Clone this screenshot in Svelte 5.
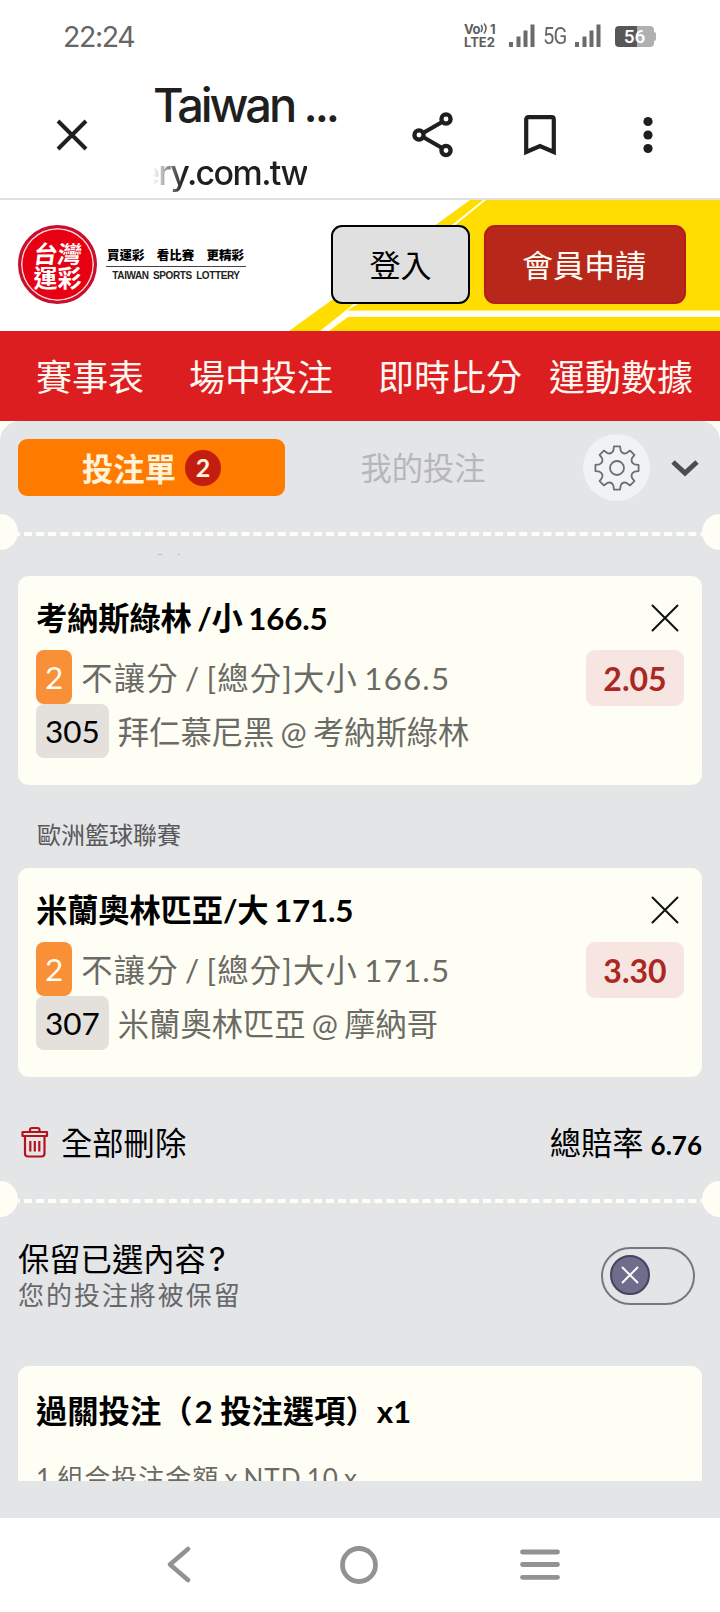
<script lang="ts">
	type Bet = {
		league?: string;
		pick: string;
		line: string;
		market: string;
		code: string;
		match: string;
		odds: string;
	};

	const navItems = ['賽事表', '場中投注', '即時比分', '運動數據'];

	const bets: Bet[] = [
		{
			pick: '考納斯綠林 /小',
			line: '166.5',
			market: '不讓分 / [總分]大小',
			code: '305',
			match: '拜仁慕尼黑 @ 考納斯綠林',
			odds: '2.05'
		},
		{
			league: '歐洲籃球聯賽',
			pick: '米蘭奧林匹亞/大',
			line: '171.5',
			market: '不讓分 / [總分]大小',
			code: '307',
			match: '米蘭奧林匹亞 @ 摩納哥',
			odds: '3.30'
		}
	];

	// eight-toothed outline, drawn around 0,0
	const gearPath = Array.from({ length: 8 }, (_, i) => {
		const at = (r: number, deg: number) => {
			const a = ((i * 45 + deg - 90) * Math.PI) / 180;
			return `${(r * Math.cos(a)).toFixed(2)} ${(r * Math.sin(a)).toFixed(2)}`;
		};
		return `${i ? 'L' : 'M'}${at(21.8, -8)} L${at(21.8, 8)} L${at(17.8, 12)} Q${at(14.6, 22.5)} ${at(17.8, 33)}`;
	}).join(' ') + ' Z';
</script>

{#snippet signal()}
	<svg class="signal" width="26" height="24" viewBox="0 0 26 24">
		<path d="M0 18h4v5H0zM7.5 12.5h4v10.5h-4zM14.5 6.5h4v16.5h-4zM21.5 0.5h4v22.5h-4z" fill="#6b6b6b" />
	</svg>
{/snippet}

{#snippet divider()}
	<div class="divider">
		<span class="notch left"></span>
		<svg width="684" height="4" viewBox="0 0 684 4">
			<path d="M0 2H684" stroke="#fffef5" stroke-width="4" stroke-dasharray="8 4.08" stroke-dashoffset="6.08" />
		</svg>
		<span class="notch right"></span>
	</div>
{/snippet}

<div class="screen">
	<div class="status">
		<span class="time">22:24</span>
		<div class="volte">
			<span class="vo">Vo<svg width="8" height="11" viewBox="0 0 8 11"><path d="M1 2q2.5 3 0 7M4 .5q4 4.5 0 10" fill="none" stroke="#5e5e5e" stroke-width="1.5" /></svg><b>1</b></span>
			<span>LTE2</span>
		</div>
		{@render signal()}
		<span class="net">5G</span>
		{@render signal()}
		<div class="battery"><span>56</span></div>
	</div>

	<div class="toolbar">
		<svg class="close" width="32" height="32" viewBox="0 0 32 32">
			<path d="M2 2L30 30M30 2L2 30" stroke="#1f1f1f" stroke-width="4" />
		</svg>
		<div class="page">
			<div class="title">Taiwan ...</div>
			<div class="url"><span>ery.com.tw</span></div>
		</div>
		<svg class="share" width="42" height="46" viewBox="0 0 42 46">
			<path d="M7.5 23L34.5 7.5M7.5 23L34.5 38.5" stroke="#1f1f1f" stroke-width="4.2" />
			<g fill="#fff" stroke="#1f1f1f" stroke-width="4.3">
				<circle cx="7" cy="23" r="4.6" />
				<circle cx="34" cy="7" r="4.6" />
				<circle cx="34" cy="38.5" r="4.6" />
			</g>
		</svg>
		<svg class="bookmark" width="32" height="41" viewBox="0 0 32 41">
			<path d="M2.2 37V4.5q0-2.3 2.3-2.3h23q2.3 0 2.3 2.3V37L16 31z" fill="none" stroke="#1f1f1f" stroke-width="4.2" />
		</svg>
		<svg class="more" width="10" height="38" viewBox="0 0 10 38" fill="#1f1f1f">
			<circle cx="5" cy="5.5" r="4.6" />
			<circle cx="5" cy="19" r="4.6" />
			<circle cx="5" cy="32.5" r="4.6" />
		</svg>
	</div>

	<header>
		<svg class="stripes" width="431" height="131" viewBox="0 0 431 131">
			<path d="M181 0H431V131H0z" fill="#ffdd00" />
			<path d="M194 0H197L69 104L58 110.5H431V117H59L40 131H31z" fill="#fffef0" />
		</svg>
		<div class="logo">
			<span>台灣</span>
			<span>運彩</span>
		</div>
		<div class="slogan">
			<div class="zh"><span>買運彩</span><span>看比賽</span><span>更精彩</span></div>
			<div class="en">TAIWAN SPORTS LOTTERY</div>
		</div>
		<button class="login">登入</button>
		<button class="register">會員申請</button>
	</header>

	<nav>
		{#each navItems as item}
			<span>{item}</span>
		{/each}
	</nav>

	<div class="backdrop">
		<main>
			<div class="tabs">
				<div class="tab active">投注單<span class="count">2</span></div>
				<div class="tab">我的投注</div>
				<div class="settings">
					<svg width="48" height="48" viewBox="-24 -24 48 48" fill="none" stroke="#6d6e71" stroke-width="1.8" stroke-linejoin="round">
						<path d={gearPath} />
						<circle r="7" />
					</svg>
				</div>
				<svg class="chevron" width="28" height="18" viewBox="0 0 28 18">
					<path d="M2 3L14 14L26 3" fill="none" stroke="#4c4d50" stroke-width="5" />
				</svg>
			</div>

			{@render divider()}

			<div class="specks"><i></i><i></i></div>

			{#each bets as bet}
				{#if bet.league}
					<div class="league">{bet.league}</div>
				{/if}
				<section class="card">
					<div class="row head">
						<h3>{bet.pick} {bet.line}</h3>
						<svg width="28" height="28" viewBox="0 0 28 28">
							<path d="M1.5 1.5L26.5 26.5M26.5 1.5L1.5 26.5" stroke="#111" stroke-width="2" stroke-linecap="round" />
						</svg>
					</div>
					<div class="row market">
						<span class="tag orange">2</span>
						<span class="text wide">{bet.market} {bet.line}</span>
						<span class="odds">{bet.odds}</span>
					</div>
					<div class="row">
						<span class="tag">{bet.code}</span>
						<span class="text">{bet.match}</span>
					</div>
				</section>
			{/each}

			<div class="summary">
				<svg width="28" height="32" viewBox="0 0 28 32" fill="none" stroke="#b5121b" stroke-width="2.2" stroke-linejoin="round">
					<path d="M1.500 6H26V10H1.500zM9 6V4q0-2 2-2h5.500q2 0 2 2V6M4 10V27.500q0 3 3 3H20.500q3 0 3-3V10M9.300 15V25.500M13.800 15V25.500M18.300 15V25.500" />
				</svg>
				<span class="clear">全部刪除</span>
				<span class="total">總賠率 <b>6.76</b></span>
			</div>

			{@render divider()}

			<div class="keep">
				<div>
					<div class="question">保留已選內容<span class="mark">?</span></div>
					<div class="hint">您的投注將被保留</div>
				</div>
				<div class="toggle">
					<span class="knob">
						<svg width="18" height="18" viewBox="0 0 18 18">
							<path d="M1 1L17 17M17 1L1 17" stroke="#fff" stroke-width="2" />
						</svg>
					</span>
				</div>
			</div>

			<section class="card parlay">
				<h3>過關投注（<span class="legs">2</span> 投注選項）x1</h3>
				<div class="stake">1 組合投注金額 x NTD 10 x</div>
			</section>
		</main>
	</div>

	<footer>
		<svg width="24" height="38" viewBox="0 0 24 38">
			<path d="M21 3L3 18.5L21 34" fill="none" stroke="#929292" stroke-width="4.5" stroke-linecap="round" stroke-linejoin="round" />
		</svg>
		<svg class="home" width="38" height="38" viewBox="0 0 38 38">
			<circle cx="19" cy="19" r="16.5" fill="none" stroke="#929292" stroke-width="4.8" />
		</svg>
		<svg width="40" height="32" viewBox="0 0 40 32">
			<path d="M2.500 3H37.500M2.500 15.500H37.500M2.500 28.300H37.500" stroke="#929292" stroke-width="4.8" stroke-linecap="round" />
		</svg>
	</footer>
</div>

<style>
	:global(body) {
		background: #fff;
	}

	.screen {
		width: 720px;
		height: 1612px;
		overflow: hidden;
		display: flex;
		flex-direction: column;
		font-family: Lato, 'Noto Sans CJK TC', sans-serif;
		color: #000;
		white-space: nowrap;
	}

	.screen * {
		box-sizing: border-box;
	}

	svg {
		display: block;
		flex: none;
	}

	.status {
		height: 72px;
		flex: none;
		display: flex;
		align-items: center;
		padding-left: 63px;
		font-family: Roboto, sans-serif;
		color: #666;
	}

	.time {
		width: 401px;
		flex: none;
		font-family: Inter, sans-serif;
		font-size: 28.5px;
		letter-spacing: -1.4px;
	}

	.volte {
		width: 45px;
		flex: none;
		font: 700 13px/13px Inter, sans-serif;
		color: #5e5e5e;
	}

	.volte span {
		display: flex;
	}

	.vo {
		letter-spacing: -0.5px;
	}

	.vo b {
		margin-left: 2px;
		font-weight: 700;
	}

	.net {
		width: 40px;
		flex: none;
		padding-left: 8px;
		font-size: 24px;
		letter-spacing: -1px;
		transform: scaleX(0.84);
		transform-origin: 8px 50%;
	}

	.battery {
		width: 39px;
		height: 21px;
		flex: none;
		margin-left: 14px;
		border-radius: 4px;
		background: linear-gradient(90deg, #575757 57%, #b0b0b0 57%);
		position: relative;
		text-align: center;
		font: 500 19px/21px Roboto, sans-serif;
		color: #fff;
	}

	.battery::after {
		content: '';
		position: absolute;
		right: -2px;
		top: 6px;
		width: 3px;
		height: 9px;
		border-radius: 0 2px 2px 0;
		background: #b0b0b0;
	}

	.toolbar {
		height: 128px;
		flex: none;
		display: flex;
		align-items: center;
		padding-left: 56px;
		border-bottom: 2px solid #dfe0e2;
		color: #1f1f1f;
		font-family: Inter, sans-serif;
		font-weight: 500;
	}

	.page {
		width: 258px;
		margin-left: 65px;
		margin-right: 1px;
		height: 126px;
	}

	.title {
		padding-top: 4px;
		font-size: 47px;
		line-height: 58px;
		letter-spacing: -3.1px;
	}

	.url {
		width: 154px;
		height: 46px;
		margin-top: 17px;
		overflow: hidden;
		display: flex;
		justify-content: flex-end;
		font-size: 34px;
		line-height: 44px;
		letter-spacing: -1.6px;
		mask-image: linear-gradient(90deg, transparent, #000 30px);
	}

	.bookmark {
		margin-left: 70px;
	}

	.more {
		margin-left: 87px;
	}

	header {
		height: 131px;
		flex: none;
		display: flex;
		align-items: center;
		padding: 0 34px 2px 18px;
		position: relative;
	}

	.stripes {
		position: absolute;
		right: 0;
		top: 0;
	}

	.logo {
		width: 79px;
		height: 79px;
		border-radius: 50%;
		background: #e60012;
		border: 3px solid #c8102e;
		box-shadow: inset 0 0 0 1.5px #fbd5d8;
		color: #fff;
		display: flex;
		flex-direction: column;
		align-items: center;
		justify-content: center;
		font: 700 24px/24px 'Noto Sans CJK TC', sans-serif;
	}

	.logo span:first-child {
		transform: skewX(-8deg);
	}

	.slogan {
		width: 140px;
		margin-left: 9px;
	}

	.zh {
		display: flex;
		justify-content: space-between;
		margin-top: -3px;
		padding: 0 2px 1px 1px;
		border-bottom: 1px solid #444;
		font: 900 12.5px/21px 'Noto Sans CJK TC', sans-serif;
	}

	.en {
		padding-top: 1px;
		text-align: center;
		font: 700 10px/15px 'Liberation Sans', sans-serif;
		letter-spacing: -0.4px;
		word-spacing: 2px;
		color: #222;
	}

	button {
		height: 79px;
		padding: 0 0 2px;
		border-radius: 11px;
		font-family: Lato, 'Noto Sans CJK TC', sans-serif;
		font-size: 31px;
		position: relative;
	}

	.login {
		width: 139px;
		margin-left: auto;
		border: 2px solid #000;
		background: #e0e0e0;
		color: #000;
	}

	.register {
		width: 202px;
		margin-left: 14px;
		padding-right: 2px;
		border: 2px solid #b71c1c;
		background: #b7281b;
		color: #fffef5;
	}

	nav {
		height: 90px;
		flex: none;
		display: flex;
		align-items: center;
		padding: 0 0 2px 36px;
		gap: 45px;
		background: #dc1e20;
		color: #fff8f0;
		font-size: 36px;
	}

	nav span:last-child {
		margin-left: -18px;
	}

	.backdrop {
		height: 1097px;
		flex: none;
		background: #fffef5;
	}

	main {
		height: 1097px;
		overflow: hidden;
		border-radius: 20px 20px 0 0;
		background: #e4e5e7;
	}

	.tabs {
		display: flex;
		align-items: center;
		height: 93px;
		padding-left: 18px;
	}

	.tab {
		width: 276px;
		height: 57px;
		display: flex;
		align-items: center;
		justify-content: center;
		margin-right: 67px;
		padding-bottom: 2px;
		font-size: 31.3px;
		color: #b6b7ba;
	}

	.tab.active {
		width: 267px;
		margin-right: 0;
		padding-bottom: 0;
		border-radius: 9px;
		background: #ff7b00;
		color: #fff3dc;
		font-weight: 700;
	}

	.count {
		width: 36px;
		height: 36px;
		margin-left: 9px;
		border-radius: 50%;
		background: #c31c10;
		text-align: center;
		font-size: 25px;
		line-height: 35px;
	}

	.settings {
		width: 67px;
		height: 67px;
		margin-left: -45px;
		border-radius: 50%;
		background: #f1f2f5;
		display: grid;
		place-items: center;
	}

	.chevron {
		margin-left: 21px;
	}

	.divider {
		height: 36px;
		display: flex;
		align-items: center;
		justify-content: space-between;
		overflow: hidden;
	}

	.divider svg {
		position: relative;
		top: 2px;
	}

	.notch {
		width: 36px;
		height: 36px;
		flex: none;
		border-radius: 50%;
		background: #fffef5;
	}

	.notch.left {
		margin-left: -18px;
	}

	.notch.right {
		margin-right: -18px;
	}

	.specks {
		height: 26px;
		display: flex;
		gap: 16px;
		padding: 4px 0 0 158px;
	}

	.specks i {
		width: 4px;
		height: 1px;
		background: #b9babc;
	}

	.specks i:last-child {
		width: 2px;
	}

	.card {
		height: 209px;
		margin: 0 18px;
		padding: 18px;
		border-radius: 11px;
		background: #fffef5;
	}

	.row {
		height: 54px;
		display: flex;
		align-items: center;
	}

	.head {
		height: 56px;
		padding: 0 5px 8px 0;
		justify-content: space-between;
	}

	h3 {
		margin: 0;
		font-size: 31.3px;
		line-height: 50px;
		font-weight: 700;
	}

	.head h3 {
		letter-spacing: -0.15px;
		word-spacing: -2px;
	}

	.tag {
		height: 54px;
		padding: 0 9px;
		border-radius: 8px;
		background: #e4e1dd;
		font-size: 31.5px;
		line-height: 55px;
	}

	.tag.orange {
		background: #f98f36;
		color: #fffef5;
	}

	.text {
		margin: -2px 0 0 9px;
		font-size: 31.3px;
		word-spacing: -1.8px;
		color: #6b6b66;
	}

	.wide {
		letter-spacing: 1.2px;
		word-spacing: -3px;
	}

	.odds {
		width: 98px;
		height: 56px;
		margin: 2px 0 0 auto;
		border-radius: 9px;
		background: #f6e5e0;
		text-align: center;
		font-size: 32px;
		line-height: 57px;
		font-weight: 700;
		color: #aa2822;
	}

	.league {
		height: 83px;
		padding: 10px 0 0 37px;
		font-size: 24px;
		line-height: 80px;
		color: #58595b;
	}

	.summary {
		height: 104px;
		margin: 0 18px;
		display: flex;
		align-items: center;
		padding: 25px 0 0 3px;
		font-size: 31.3px;
	}

	.clear {
		margin: -1px 0 0 12px;
	}

	.total {
		margin-left: auto;
		word-spacing: -1px;
	}

	.total b {
		font-size: 26px;
	}

	.keep {
		height: 149px;
		padding: 24px 25px 0 18px;
		display: flex;
		justify-content: space-between;
	}

	.question {
		font-size: 31.3px;
		line-height: 37px;
	}

	.mark {
		margin-left: 3px;
		font-family: Inter, sans-serif;
		font-size: 33px;
		line-height: 1;
	}

	.hint {
		font-size: 26px;
		line-height: 35px;
		letter-spacing: 1.95px;
		color: #66676a;
	}

	.toggle {
		width: 94px;
		height: 58px;
		margin-top: 6px;
		padding: 6px 7px;
		border: 2px solid #777684;
		border-radius: 29px;
	}

	.knob {
		width: 40px;
		height: 40px;
		border-radius: 50%;
		border: 2px solid #45435f;
		background: #6f6d8b;
		display: grid;
		place-items: center;
	}

	.parlay {
		height: 115px;
		padding-top: 20px;
		border-radius: 11px 11px 0 0;
		overflow: hidden;
	}

	.legs {
		margin-left: 2px;
	}

	.stake {
		margin-top: 22px;
		font-size: 26px;
		line-height: 40px;
		letter-spacing: 1px;
		word-spacing: -2.5px;
		color: #6b6b66;
	}

	footer {
		flex: 1;
		display: flex;
		align-items: center;
		padding: 0 160px 0 167px;
		justify-content: space-between;
	}

	.home {
		margin-left: 7px;
	}
</style>
